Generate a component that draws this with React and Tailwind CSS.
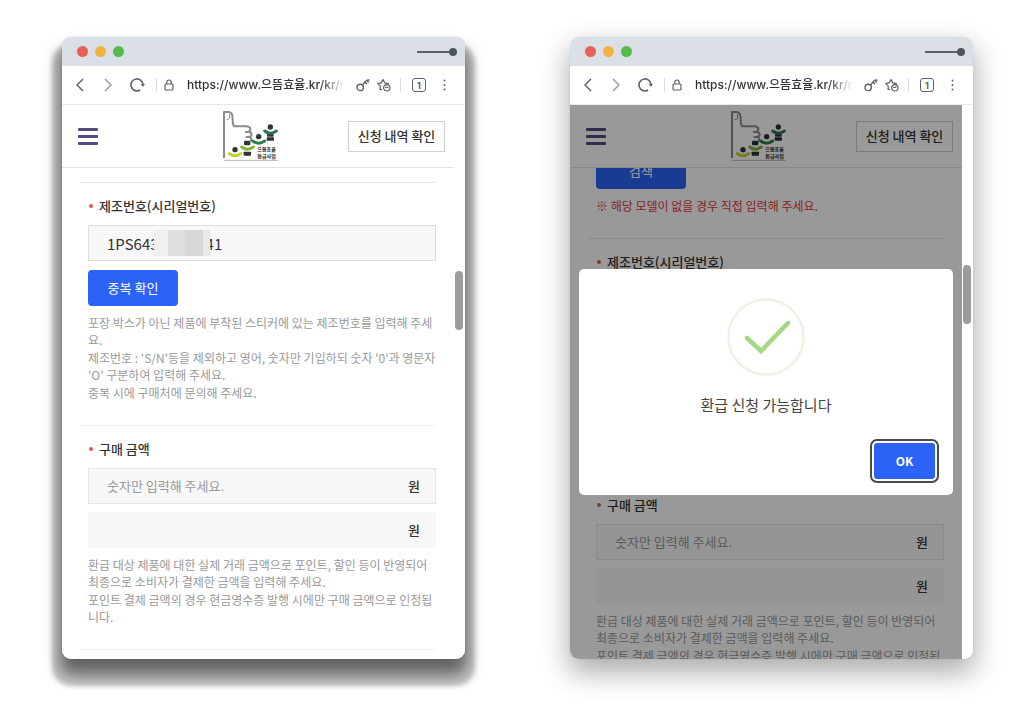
import React, { useState } from "react";

const SERIAL = "1PS643" + "\u00a0".repeat(14) + "41";

const Logo = () => (
  <svg width="58" height="52" viewBox="21 12 174 156" role="img" aria-label="으뜸효율 환급사업">
    <g fill="none" stroke="#8b8b8b" strokeWidth="6" strokeLinejoin="round">
      <path d="M27 156V18h12c9 0 12 4 13 11l2 25c1 5 3 7 7 7h33c15 0 16 16 3 17h-7" />
      <path d="M99 78c14 0 14 14 2 15h-9" />
      <path d="M101 93c9 1 10 8 5 13" />
      <path d="M44 24v9c0 6-4 8-9 8" strokeWidth="3" />
      <path d="M27 163h161" stroke="#b5b5b5" strokeWidth="3" />
    </g>
    <g fill="#2e3338">
      <circle cx="60" cy="131" r="8" />
      <rect x="87" y="104" width="19" height="14" rx="4" />
      <rect x="86" y="137" width="22" height="12" rx="2" />
      <circle cx="131" cy="92" r="8" />
      <circle cx="166" cy="63" r="8" />
      <rect x="156" y="84" width="20" height="8" rx="2" />
      <rect x="155" y="94" width="22" height="10" rx="2" />
    </g>
    <g fill="none" strokeWidth="9" strokeLinecap="round">
      <path d="M43 143q17 13 34 0" stroke="#c3d32b" />
      <path d="M80 123q17 13 35 0" stroke="#86b332" />
      <path d="M113 105q18 13 36 0" stroke="#2f7d4a" />
      <path d="M149 75q17 13 35 0" stroke="#2d7052" />
    </g>
    <g fill="#222" fontSize="15" fontWeight="700" fontFamily="Noto Sans CJK KR, sans-serif">
      <text x="127" y="134">으뜸효율</text>
      <text x="127" y="155">환급사업</text>
    </g>
  </svg>
);

const TitleBar = () => (
  <div className="flex h-[29px] items-center justify-between bg-[#dae0e5] pr-2 pl-[15px]">
    <div className="flex gap-[7px]">
      <span className="size-[11px] rounded-full bg-[#e8605a]" />
      <span className="size-[11px] rounded-full bg-[#f0b341]" />
      <span className="size-[11px] rounded-full bg-[#55bb49]" />
    </div>
    <div className="flex items-center">
      <span className="h-[2px] w-8 bg-[#5a626b]" />
      <span className="size-2 rounded-full bg-[#4d545c]" />
    </div>
  </div>
);

const AddressBar = () => (
  <div className="flex h-[39px] items-center border-b border-[#e9e9e9] pr-[19px] pl-[14px] text-[#5f6266]">
    <button type="button" aria-label="뒤로">
      <svg width="8" height="14" viewBox="0 0 8 14" fill="none" stroke="currentColor" strokeWidth="1.5">
        <path d="M7 1 1 7l6 6" />
      </svg>
    </button>
    <button type="button" aria-label="앞으로" className="ml-5 text-[#9b9da0]">
      <svg width="8" height="14" viewBox="0 0 8 14" fill="none" stroke="currentColor" strokeWidth="1.5">
        <path d="m1 1 6 6-6 6" />
      </svg>
    </button>
    <button type="button" aria-label="새로고침" className="ml-[18px]">
      <svg width="15" height="14" viewBox="0 0 15 14" fill="none" stroke="currentColor" strokeWidth="1.6">
        <path d="M10.2 12A6 6 0 1 1 13 7" />
        <path d="M10.6 6h4.4l-2 2.8z" fill="currentColor" stroke="none" />
      </svg>
    </button>
    <span className="ml-[11px] h-[14px] w-px bg-[#dcdcdc]" />
    <svg className="ml-[7px]" width="10" height="12" viewBox="0 0 10 12" fill="none" stroke="currentColor" strokeWidth="1.2">
      <rect x="1" y="5" width="8" height="6" rx="1" />
      <path d="M2.8 5V3.2a2.2 2.2 0 0 1 4.4 0V5" />
    </svg>
    <div className="ml-[13px] w-0 flex-1 overflow-hidden whitespace-nowrap text-xs font-medium text-[#333] [font-family:Inter,'Noto_Sans_CJK_KR',sans-serif] [mask-image:linear-gradient(to_right,black_84%,transparent)]">
      https://www.으뜸효율.kr/kr/r
    </div>
    <button type="button" aria-label="비밀번호" className="ml-[11px]">
      <svg width="14" height="14" viewBox="0 0 14 14" fill="none" stroke="currentColor" strokeWidth="1.4">
        <circle cx="4.2" cy="9.4" r="3.2" />
        <path d="M6.5 7.1 9.4 3.4c.9-1.1 2.2-1.5 4.2-1.3M9 4l1.8 1.9M11.4 2.6l1.2 2" />
      </svg>
    </button>
    <button type="button" aria-label="즐겨찾기" className="ml-[7px]">
      <svg width="14" height="14" viewBox="0 0 14 14" fill="none" stroke="currentColor" strokeWidth="1.2" strokeLinejoin="round">
        <path d="M5 11.4H3l.3-3.2L.8 5.6l3.3-.7L6 1.6l1.8 3.3 3.6.7-.9 1" />
        <circle cx="9.8" cy="9.8" r="3.2" />
        <path d="M8.2 9.4h3.2" />
      </svg>
    </button>
    <span className="ml-[9px] h-[14px] w-px bg-[#dcdcdc]" />
    <button
      type="button"
      aria-label="탭 1개"
      className="ml-[11px] flex size-[14px] items-center justify-center rounded-[3px] border border-[#5f6266] font-[Inter] text-[9px] leading-none font-bold"
    >
      1
    </button>
    <button type="button" aria-label="메뉴" className="ml-[17px]">
      <svg width="3" height="12" viewBox="0 0 3 12" fill="currentColor">
        <circle cx="1.5" cy="1.5" r="1" />
        <circle cx="1.5" cy="6" r="1" />
        <circle cx="1.5" cy="10.5" r="1" />
      </svg>
    </button>
  </div>
);

const SiteHeader = () => (
  <header className="flex h-[63px] items-center border-b border-[#e4e4e4] pr-[9px] pl-4">
    <button type="button" aria-label="전체 메뉴" className="flex flex-col gap-1">
      <span className="h-[3px] w-5 rounded-[1px] bg-[#524d80]" />
      <span className="h-[3px] w-5 rounded-[1px] bg-[#524d80]" />
      <span className="h-[3px] w-5 rounded-[1px] bg-[#524d80]" />
    </button>
    <a href="#home" className="mr-[68px] ml-auto">
      <Logo />
    </a>
    <button
      type="button"
      className="h-[31px] w-[97px] border border-[#cfcfcf] text-[13px] font-medium whitespace-nowrap text-[#333]"
    >
      신청 내역 확인
    </button>
  </header>
);

const FieldLabel = ({ htmlFor, children }) => (
  <label htmlFor={htmlFor} className="mb-[9px] flex items-center gap-[6px] text-[13px] leading-5 font-medium text-[#333]">
    <span className="ml-px size-1 rounded-full bg-[#e5555a]" />
    {children}
  </label>
);

const BlueButton = ({ children }) => (
  <button type="button" className="block h-9 w-[90px] rounded-[4px] bg-[#2b63f6] text-[13px] text-white">
    {children}
  </button>
);

const HelpText = ({ lines }) => (
  <div className="mt-2 flex flex-col gap-px text-xs leading-[17px] text-[#999]">
    {lines.map((line) => (
      <p key={line}>{line}</p>
    ))}
  </div>
);

const SerialSection = ({ id }) => {
  const [serial, setSerial] = useState(SERIAL);

  return (
    <section className="border-t border-[#e6e6e6] pt-[13px] pb-6 pl-2">
      <FieldLabel htmlFor={`${id}-serial`}>제조번호(시리얼번호)</FieldLabel>
      <div className="relative mb-[9px]">
        <input
          id={`${id}-serial`}
          type="text"
          value={serial}
          onChange={(e) => setSerial(e.target.value)}
          className="block h-9 w-full border border-[#dedede] bg-[#f8f8f8] px-[18px] text-[15px] text-[#333]"
        />
        {/* Masked digits */}
        <div className="absolute top-[5px] left-[66px] flex h-[26px] w-14">
          <span className="w-[14px] bg-[#f0f0f0]" />
          <span className="w-[17px] bg-[#dedede]" />
          <span className="w-[18px] bg-[#d7d7d7]" />
          <span className="w-[7px] bg-[#e9e9e9]" />
        </div>
      </div>
      <BlueButton>중복 확인</BlueButton>
      <HelpText
        lines={[
          "포장 박스가 아닌 제품에 부착된 스티커에 있는 제조번호를 입력해 주세요.",
          "제조번호 : 'S/N'등을 제외하고 영어, 숫자만 기입하되 숫자 '0'과 영문자 'O' 구분하여 입력해 주세요.",
          "중복 시에 구매처에 문의해 주세요.",
        ]}
      />
    </section>
  );
};

const AmountSection = ({ id }) => (
  <section className="border-t border-[#efefef] pt-[13px] pb-6 pl-2">
    <FieldLabel htmlFor={`${id}-amount`}>구매 금액</FieldLabel>
    <div className="flex h-9 items-center border border-[#e6e6e6] bg-[#f8f8f8] pr-[15px] pl-[18px] text-[13px]">
      <input
        id={`${id}-amount`}
        type="text"
        placeholder="숫자만 입력해 주세요."
        className="w-0 flex-1 text-[#333] placeholder:text-[#999]"
      />
      <span className="font-medium text-[#333]">원</span>
    </div>
    <div className="mt-2 flex h-9 items-center bg-[#f8f8f8] pr-4 pl-[19px] text-[13px]">
      <input type="text" readOnly aria-label="구매 금액 확인" className="w-0 flex-1" />
      <span className="font-medium text-[#333]">원</span>
    </div>
    <HelpText
      lines={[
        "환급 대상 제품에 대한 실제 거래 금액으로 포인트, 할인 등이 반영되어 최종으로 소비자가 결제한 금액을 입력해 주세요.",
        "포인트 결제 금액의 경우 현금영수증 발행 시에만 구매 금액으로 인정됩니다.",
      ]}
    />
  </section>
);

const ConfirmDialog = ({ onClose }) => (
  <div className="absolute inset-0 flex items-center justify-center bg-black/40 px-[9px]">
    <div role="dialog" aria-modal="true" className="flex w-full flex-col items-center rounded-[5px] bg-white px-[18px] pt-[29px] pb-4">
      <svg width="78" height="78" viewBox="0 0 78 78" fill="none">
        <circle cx="39" cy="39" r="37.5" stroke="#edf3e3" strokeWidth="2.5" />
        <path d="m20 40 14 13 27-28" stroke="#a5d885" strokeWidth="4.5" strokeLinecap="round" />
      </svg>
      <p className="mt-[18px] text-[15px] leading-[22px] text-[#444]">환급 신청 가능합니다</p>
      <button
        type="button"
        onClick={onClose}
        className="mt-[27px] h-9 w-[61px] self-end rounded-[3px] bg-[#2b63f6] text-xs font-bold text-white outline-2 outline-offset-2 outline-[#4a4a4a]"
      >
        OK
      </button>
    </div>
  </div>
);

const BrowserWindow = ({ className, thumbClass, children, dialog }) => (
  <div className={`flex min-w-0 flex-1 flex-col rounded-[9px] ${className}`}>
    <div className="flex grow flex-col overflow-hidden rounded-[9px] bg-white">
      <TitleBar />
      <AddressBar />
      <div className="flex grow">
        <div className="relative flex min-w-0 flex-1 flex-col">
          <SiteHeader />
          {children}
          {dialog}
        </div>
        <div className="w-[11px] pl-px">
          <div className={`h-[59px] w-2 rounded-full bg-[#9c9c9c] ${thumbClass}`} />
        </div>
      </div>
    </div>
  </div>
);

const App = () => {
  const [dialogOpen, setDialogOpen] = useState(true);

  return (
    <main className="flex min-h-screen items-start bg-white pt-[37px] pr-[51px] pb-14 pl-[62px] [font-family:'Noto_Sans_CJK_KR',sans-serif]">
      <div className="flex flex-1 gap-[105px]">
        <BrowserWindow
          className="shadow-[0_0_1px_rgba(0,0,0,0.4),0_17px_4px_10px_rgba(0,0,0,0.22),0_14px_16px_2px_rgba(0,0,0,0.5)]"
          thumbClass="mt-[166px]"
        >
          <div className="px-[18px] pt-[14px] pb-[9px]">
            <SerialSection id="form" />
            <AmountSection id="form" />
            <hr className="border-[#efefef]" />
          </div>
        </BrowserWindow>

        <BrowserWindow
          className="shadow-[0_0_1px_rgba(0,0,0,0.2),0_12px_28px_2px_rgba(0,0,0,0.32)]"
          thumbClass="mt-[160px]"
          dialog={dialogOpen && <ConfirmDialog onClose={() => setDialogOpen(false)} />}
        >
          <div className="h-0 grow overflow-hidden px-[18px]">
            <div className="-mt-[15px] pb-6 pl-2">
              <BlueButton>검색</BlueButton>
              <p className="mt-2 text-xs leading-[17px] text-[#e5383b]">
                ※ 해당 모델이 없을 경우 직접 입력해 주세요.
              </p>
            </div>
            <SerialSection id="popup" />
            <AmountSection id="popup" />
          </div>
        </BrowserWindow>
      </div>
    </main>
  );
};

export default App;
